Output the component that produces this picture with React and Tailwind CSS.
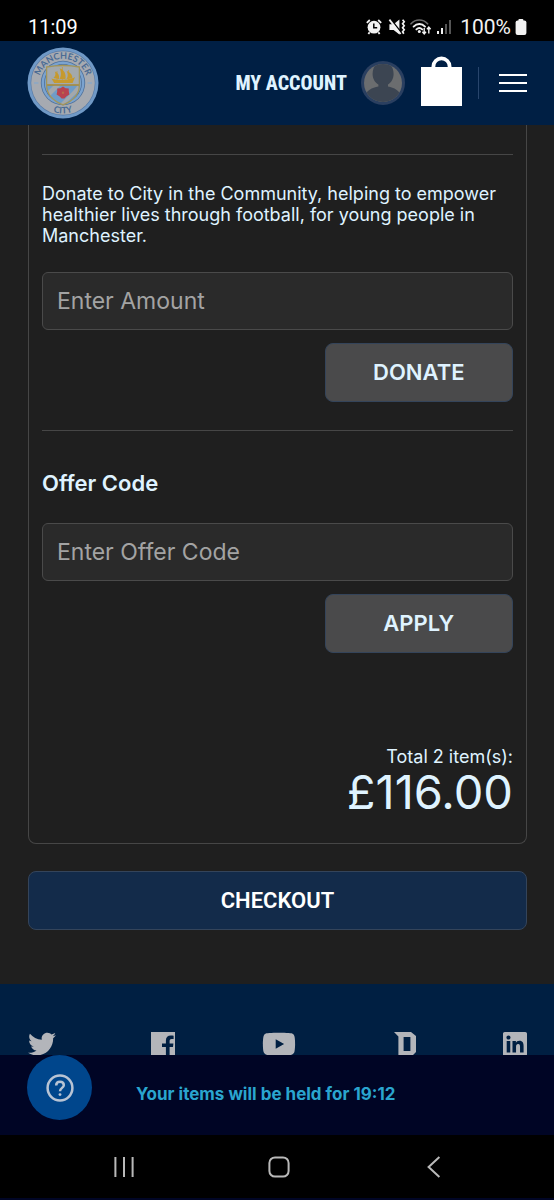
import { FaLinkedin, FaTwitter, FaYoutube } from "react-icons/fa";

function StatusIcons() {
  return (
    <div className="flex items-center text-[#f2f2f2]">
      <svg viewBox="0 0 16 16" className="h-4 w-4" aria-hidden="true">
        <circle cx="8" cy="8.2" r="6.4" fill="currentColor" />
        <path
          d="M.8 3.8 3.8 1M15.2 3.8 12.2 1M3.6 13.2 2.4 15M12.4 13.2 13.6 15"
          stroke="currentColor"
          strokeWidth="1.8"
        />
        <path d="M7.8 4.4V8.8H11.2" fill="none" stroke="#000" strokeWidth="1.5" />
      </svg>
      <svg viewBox="0 0 18 18" className="ml-1.5 h-[18px] w-[18px]" aria-hidden="true">
        <path d="M1.4 6.2H5.6L11.4 1.6V16.4L5.6 12H1.4Z" fill="currentColor" />
        <path d="M2.6 1 14 15.4" stroke="#000" strokeWidth="1.6" />
        <path d="M1.4 1.6 12.6 16" stroke="currentColor" strokeWidth="1.8" />
        <path
          d="M14.6 1.8 16.2 3.8 14.6 5.8 16.2 7.8 14.6 9.8 16.2 11.8 14.6 13.8 15.8 15.8"
          fill="none"
          stroke="currentColor"
          strokeWidth="1.7"
        />
      </svg>
      <svg viewBox="0 0 22 18" className="ml-1 h-[18px] w-[22px]" aria-hidden="true">
        <g fill="none" strokeLinecap="round">
          <path d="M1 5.8C5.6.8 13 .8 17.6 5.8" stroke="#6b6b6b" strokeWidth="1.6" />
          <path d="M3.6 8.6C7 5.2 11.8 5.2 15 8.6" stroke="currentColor" strokeWidth="1.9" />
          <path d="M6.4 11.4C8.2 9.8 10.4 9.8 12.2 11.4" stroke="currentColor" strokeWidth="1.9" />
        </g>
        <circle cx="9.3" cy="13.6" r="1.5" fill="currentColor" />
        <path
          d="M14.2 10V15.6M12.4 13.8 14.2 16 16 13.8M18.8 15.4V9.2M17 11.2 18.8 9 20.6 11.2"
          fill="none"
          stroke="currentColor"
          strokeWidth="1.4"
        />
      </svg>
      <svg viewBox="0 0 16 18" className="ml-1 h-[18px] w-4" aria-hidden="true">
        <rect x="1" y="13" width="2" height="3" fill="currentColor" />
        <rect x="5" y="10" width="2" height="6" fill="currentColor" />
        <rect x="9" y="6" width="2" height="10" fill="#555" />
        <rect x="13" y="2" width="2" height="14" fill="#555" />
      </svg>
      <span className="ml-2 text-[21px] leading-5">100%</span>
      <svg viewBox="0 0 12 16" className="ml-1 h-4 w-3" aria-hidden="true">
        <rect x="3.4" y="0" width="5" height="3" rx="1" fill="currentColor" />
        <rect x=".6" y="1.6" width="10.8" height="14.4" rx="2" fill="currentColor" />
      </svg>
    </div>
  );
}

function ClubBadge() {
  return (
    <svg viewBox="0 0 72 72" className="h-[72px] w-[72px]" role="img" aria-label="Manchester City">
      <defs>
        <path id="badge-top" d="M11.8 36A24.2 24.2 0 0 1 60.2 36" />
        <path id="badge-bottom" d="M5.6 36A30.4 30.4 0 0 0 66.4 36" />
        <clipPath id="badge-shield">
          <path d="M19.6 20Q36 17 52.4 20V38C52.4 47.4 45.8 54 36 57.8 26.2 54 19.6 47.4 19.6 38Z" />
        </clipPath>
      </defs>
      <circle cx="36" cy="36" r="35.5" fill="#7099c6" />
      <circle cx="36" cy="36" r="32.4" fill="#5679a6" />
      <circle cx="36" cy="36" r="31.8" fill="#a6aab1" />
      <circle cx="36" cy="36" r="22.2" fill="#4f719b" />
      <circle cx="36" cy="36" r="21.4" fill="#7ba3cf" />
      <circle cx="36" cy="36" r="19" fill="#4f719b" />
      <circle cx="36" cy="36" r="18.2" fill="#7ba3cf" />
      <g clipPath="url(#badge-shield)">
        <rect x="19" y="17" width="34" height="21" fill="#a3a9ad" />
        <rect x="19" y="38" width="34" height="20" fill="#6f9cc7" />
        <path d="M19 46 27 38H34L21 51ZM51 38 53 43 38 57 33 57 46 44Z" fill="#a3a8ac" />
        <path d="M19 38H53" stroke="#a98a35" strokeWidth="1.4" />
        <g fill="#c69a2e">
          <path d="M24.4 31.4C29 33.4 43 33.4 48 30L45.6 36H27.2Z" />
          <path d="M26.4 31C29 28.6 28.6 26.4 27.8 24.4 31 25.4 32.8 28.4 32 32ZM32.4 32C34.8 28.4 34 24.6 32.6 21.2 37 22.6 39.6 27.2 38.4 32ZM39.4 32C41.4 29.6 41 26.6 39.6 24 43.4 25.2 46 28.6 45.2 31.4Z" />
          <path d="M35.4 20V34M41.6 23V34M30 24V34" stroke="#c69a2e" strokeWidth=".7" />
        </g>
        <path
          d="M36 39.6 38.6 41.2 41.8 41.4 41.8 44.6 42.4 47.6 39.6 49.2 37.4 51.6 34.6 51.6 32.4 49.2 29.6 47.6 30.2 44.6 30.2 41.4 33.4 41.2Z"
          fill="#b8434f"
        />
        <circle cx="36" cy="45.8" r="1.2" fill="#b86a4a" />
      </g>
      <path
        d="M19.6 20Q36 17 52.4 20V38C52.4 47.4 45.8 54 36 57.8 26.2 54 19.6 47.4 19.6 38Z"
        fill="none"
        stroke="#a3955a"
        strokeWidth="1.3"
      />
      <path d="M7 36H11.4M60.6 36H65" stroke="#8aa8c6" strokeWidth="1.6" />
      <g fill="#4a6b94" textAnchor="middle" className="font-['Lato'] font-bold">
        <text fontSize="9">
          <textPath href="#badge-top" startOffset="50%">
            MANCHESTER
          </textPath>
        </text>
        <text fontSize="9">
          <textPath href="#badge-bottom" startOffset="50%">
            CITY
          </textPath>
        </text>
      </g>
    </svg>
  );
}

function Avatar() {
  return (
    <svg viewBox="0 0 44 44" className="h-11 w-11" aria-hidden="true">
      <defs>
        <clipPath id="avatar-disc">
          <circle cx="22" cy="22" r="19" />
        </clipPath>
      </defs>
      <circle cx="22" cy="22" r="22" fill="#2a3f60" />
      <circle cx="22" cy="22" r="19" fill="#6b6d6f" />
      <g clipPath="url(#avatar-disc)" fill="#3c4552">
        <path d="M11.6 13C11.6 6 15 1 22 1S32.6 6 32.6 13C32.6 18 30 21.6 27 23.6V25.6C33 26.6 39 30 40 35V44H4V35C5 30 11 26.6 17.4 25.6V23.6C14.2 21.6 11.6 18 11.6 13Z" />
      </g>
    </svg>
  );
}

function Header() {
  return (
    <header className="flex h-[84px] items-center justify-between bg-[#001f44] px-[27px]">
      <a href="#home">
        <ClubBadge />
      </a>

      <div className="flex items-center">
        <a
          href="#account"
          className="font-['Roboto_Condensed','Liberation_Sans_Narrow','Liberation_Sans',sans-serif] text-xl font-extrabold leading-6 text-[#dff3ff]"
        >
          MY ACCOUNT
        </a>
        <a href="#profile" aria-label="Profile" className="ml-3.5">
          <Avatar />
        </a>
        <a href="#basket" aria-label="Basket" className="ml-4">
          <svg viewBox="0 0 41 50" className="mb-1 h-[50px] w-[41px]" aria-hidden="true">
            <path d="M0 11H41V50H0Z" fill="#fff" />
            <path d="M12.4 14V10.5A8 8 0 0 1 28.6 10.5V14" fill="none" stroke="#fff" strokeWidth="3.8" />
          </svg>
        </a>
        <span className="ml-4 h-8 w-px bg-[#28456c]" />
        <button type="button" aria-label="Menu" className="ml-5 flex flex-col gap-1.5">
          <span className="h-0.5 w-7 bg-white" />
          <span className="h-0.5 w-7 bg-white" />
          <span className="h-0.5 w-7 bg-white" />
        </button>
      </div>
    </header>
  );
}

function TextField({ id, placeholder }) {
  return (
    <input
      id={id}
      type="text"
      placeholder={placeholder}
      className="block h-[58px] w-full rounded-md border border-[#4a4a4a] bg-[#2a2a2a] px-3.5 text-[23px] text-white placeholder:text-[#a3a3a3]"
    />
  );
}

function ActionButton({ children }) {
  return (
    <button
      type="button"
      className="ml-auto mt-[13px] block h-[59px] w-2/5 rounded-lg border border-[#34445a] bg-[#4a4a4b] text-[22px] font-semibold text-[#dff3ff]"
    >
      {children}
    </button>
  );
}

function OrderSummary() {
  return (
    <section className="rounded-b-lg border border-t-0 border-[#464646] px-[13px] pb-[26px] pt-[29px] text-[#dff3ff]">
      <hr className="border-[#464646]" />
      <label htmlFor="amount" className="mb-[26px] mt-7 block text-lg leading-[21px]">
        Donate to City in the Community, helping to empower healthier lives through football, for
        young people in Manchester.
      </label>
      <TextField id="amount" placeholder="Enter Amount" />
      <ActionButton>DONATE</ActionButton>

      <hr className="mt-7 border-[#464646]" />
      <label htmlFor="offer" className="mb-[26px] mt-[38px] block text-[22px] font-semibold leading-7">
        Offer Code
      </label>
      <TextField id="offer" placeholder="Enter Offer Code" />
      <ActionButton>APPLY</ActionButton>

      <div className="mt-[93px] text-right">
        <p className="text-lg leading-[21px]">Total 2 item(s):</p>
        <p className="text-[47px] leading-[50px]">£116.00</p>
      </div>
    </section>
  );
}

function SocialLinks() {
  return (
    <footer className="h-[71px] overflow-hidden bg-[#001f42] pl-7 pr-[27px] pt-12">
      <nav className="flex h-6 items-center justify-between text-[#b3b5ba]">
        <a href="#twitter" aria-label="Twitter">
          <FaTwitter className="h-7 w-7" />
        </a>
        <a href="#facebook" aria-label="Facebook" className="pl-2">
          <svg viewBox="0 0 24 24" className="h-6 w-6" fill="currentColor">
            <path d="M0 0H24V24H18.6V14.9H22L22.4 11.4H18.6V9C18.6 7.6 19.2 6.9 20.6 6.9H22.6V3.8C21.8 3.7 21 3.6 19.8 3.6 16.8 3.6 14.9 5.4 14.9 8.5V11.4H11V14.9H14.9V24H0Z" />
          </svg>
        </a>
        <a href="#youtube" aria-label="YouTube" className="pr-1">
          <FaYoutube className="h-[34px] w-[34px]" />
        </a>
        <a href="#dugout" aria-label="Dugout" className="pl-2">
          <svg viewBox="0 0 22 24" className="h-6 w-[22px]" fill="currentColor">
            <path d="M0 0H17L22 4V20L18 24H4.4V4.4ZM9.6 5V19H16.4V5Z" fillRule="evenodd" />
          </svg>
        </a>
        <a href="#linkedin" aria-label="LinkedIn">
          <FaLinkedin className="h-7 w-6" />
        </a>
      </nav>
    </footer>
  );
}

function HoldBanner() {
  return (
    <div className="flex h-20 items-start bg-[#000525] pl-[27px]">
      <button
        type="button"
        aria-label="Help"
        className="flex h-[65px] w-[65px] items-center justify-center rounded-full bg-[#00468c]"
      >
        <svg viewBox="0 0 28 28" className="h-7 w-7" fill="none" stroke="#b8c4d4" strokeWidth="2.5">
          <circle cx="14" cy="14" r="12.4" />
          <path d="M10.2 11.4C10.2 9 11.8 7.8 14 7.8S17.8 9.2 17.8 11.2C17.8 13.8 14 14 14 17.2" />
          <circle cx="14" cy="20.6" r="1.4" fill="#b8c4d4" stroke="none" />
        </svg>
      </button>
      <p className="ml-11 mt-[29px] text-[17px] font-bold leading-[21px] text-[#2aa5cf]">
        Your items will be held for 19:12
      </p>
    </div>
  );
}

function SystemNav() {
  return (
    <div className="border-b-2 border-[#000525] bg-black">
      <div className="grid h-[63px] grid-cols-3 place-items-center pl-[46px] pr-[42px] text-[#b9b9b9]">
        <button type="button" aria-label="Recent apps">
          <svg viewBox="0 0 22 22" className="h-[22px] w-[22px]" stroke="currentColor" strokeWidth="2">
            <path d="M2.4 1V21M11 1V21M19.6 1V21" />
          </svg>
        </button>
        <button type="button" aria-label="Home">
          <svg viewBox="0 0 22 22" className="h-[22px] w-[22px]" fill="none" stroke="currentColor" strokeWidth="2">
            <rect x="1.4" y="1.4" width="19.2" height="19.2" rx="5.6" />
          </svg>
        </button>
        <button type="button" aria-label="Back">
          <svg viewBox="0 0 22 22" className="h-[22px] w-[22px]" fill="none" stroke="currentColor" strokeWidth="2">
            <path d="M16.4 1 5.6 11 16.4 21" />
          </svg>
        </button>
      </div>
    </div>
  );
}

export default function App() {
  return (
    <div className="bg-[#1f1f1f] font-['Inter',sans-serif]">
      <div className="flex h-[41px] items-center justify-between bg-black pl-7 pr-[27px] pt-3 font-['Roboto',sans-serif]">
        <time className="text-xl leading-5 text-white">11:09</time>
        <StatusIcons />
      </div>

      <Header />

      <main className="pb-[54px] pl-7 pr-[27px]">
        <OrderSummary />
        <button
          type="button"
          className="mt-[27px] block h-[59px] w-full rounded-lg border border-[#34445a] bg-[#132b4a] font-['Roboto',sans-serif] text-[22px] font-semibold text-white"
        >
          CHECKOUT
        </button>
      </main>

      <SocialLinks />
      <HoldBanner />
      <SystemNav />
    </div>
  );
}
